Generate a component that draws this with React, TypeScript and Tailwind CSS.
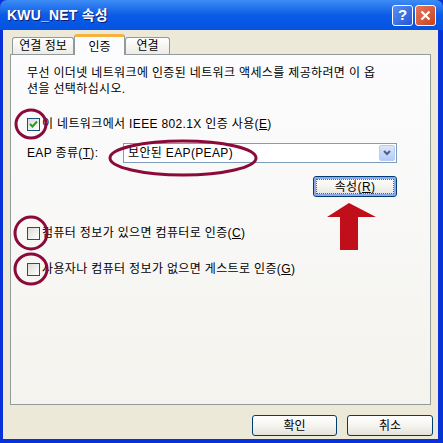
import React from 'react'

const font = { fontFamily: '"Liberation Sans", "Noto Sans CJK KR", sans-serif' }

function CheckBox({ checked }: { checked?: boolean }) {
  return (
    <span className="relative flex h-[13px] w-[13px] shrink-0 items-center justify-center border border-[#1C5180] bg-gradient-to-br from-[#DCDBD5] to-white">
      {checked && (
        <svg width="9" height="9" viewBox="0 0 9 9">
          <path d="M1 4 L3.5 6.5 L8 1.5" stroke="#21A121" strokeWidth="2" fill="none" />
        </svg>
      )}
    </span>
  )
}

function XpButton({ children, focused, className }: { children: React.ReactNode; focused?: boolean; className?: string }) {
  return (
    <div
      className={
        'flex items-center justify-center rounded-[3px] border border-[#003C74] bg-gradient-to-b from-white via-[#F5F4EF] to-[#E3E2DA] text-[12px] text-black ' +
        (focused ? 'shadow-[inset_0_0_0_2px_#8FA9E8] ' : '') +
        (className ?? '')
      }
    >
      {focused ? (
        <span className="flex h-[15px] w-[78px] items-center justify-center border border-dotted border-black/60">{children}</span>
      ) : (
        children
      )}
    </div>
  )
}

export default function App() {
  return (
    <div className="relative flex h-[443px] w-[443px] flex-col bg-[#0831D9] text-black" style={font}>
      {/* Title bar */}
      <div className="flex h-[30px] items-center justify-between rounded-t-[7px] bg-gradient-to-b from-[#3D8CF5] via-[#0A5BE6] to-[#0453E2] pl-[7px] pr-[7px]">
        <span className="text-[14px] font-bold tracking-[0.2px] text-white [text-shadow:1px_1px_0_#0A1E78]">KWU_NET 속성</span>
        <div className="flex gap-[2px]">
          <div className="flex h-[21px] w-[21px] items-center justify-center rounded-[3px] border border-white bg-gradient-to-br from-[#5B8EF5] to-[#2556D4] text-[15px] font-bold text-white">
            ?
          </div>
          <div className="flex h-[21px] w-[21px] items-center justify-center rounded-[3px] border border-white bg-gradient-to-br from-[#E8765A] to-[#C6421E]">
            <svg width="11" height="11" viewBox="0 0 11 11">
              <path d="M1.5 1.5 L9.5 9.5 M9.5 1.5 L1.5 9.5" stroke="white" strokeWidth="2.2" />
            </svg>
          </div>
        </div>
      </div>

      {/* Body */}
      <div className="mx-[3px] mb-[4px] mr-[5px] flex flex-1 flex-col bg-[#ECE9D8] pl-[7px] pr-[5px]">
        {/* Tabs */}
        <div className="mt-[3px] flex h-[21px] items-end pl-[2px]">
          <div className="flex h-[17px] w-[62px] items-center justify-center rounded-t-[3px] border border-b-0 border-[#919B9C] bg-gradient-to-b from-white to-[#ECEBE6] text-[12px]">
            연결 정보
          </div>
          <div className="relative z-10 -mb-[1px] flex h-[21px] w-[51px] items-start justify-center rounded-t-[3px] border border-b-0 border-t-[3px] border-[#919B9C] border-t-[#F5B33C] bg-[#FCFCFE] pt-[1px] text-[12px]">
            인증
          </div>
          <div className="flex h-[17px] w-[45px] items-center justify-center rounded-t-[3px] border border-b-0 border-[#919B9C] bg-gradient-to-b from-white to-[#ECEBE6] text-[12px]">
            연결
          </div>
        </div>

        {/* Panel */}
        <div className="flex h-[351px] w-[421px] flex-col border border-[#919B9C] bg-gradient-to-b from-[#FCFCFE] to-[#F4F3EE] pl-[16px] pr-[33px] pt-[10px] text-[12px] tracking-[0.35px]">
          <p className="leading-[16px]">
            무선 이더넷 네트워크에 인증된 네트워크 액세스를 제공하려면 이 옵
            <br />
            션을 선택하십시오.
          </p>

          <label className="mt-[19px] flex h-[16px] items-center gap-[2px]">
            <CheckBox checked />
            <span>이 네트워크에서 IEEE 802.1X 인증 사용(<u>E</u>)</span>
          </label>

          <div className="mt-[11px] flex h-[20px] items-center">
            <span className="w-[96px] shrink-0">
              EAP 종류(<u>T</u>):
            </span>
            <div className="flex h-[20px] flex-1 items-center justify-between border border-[#7F9DB9] bg-white pl-[4px] pr-[1px]">
              <span>보안된 EAP(PEAP)</span>
              <div className="flex h-[16px] w-[16px] items-center justify-center rounded-[2px] border border-[#B9CCF6] bg-gradient-to-b from-[#DCE6FD] to-[#B5CBF8]">
                <svg width="8" height="6" viewBox="0 0 8 6">
                  <path d="M1 1 L4 4 L7 1" stroke="#4D6185" strokeWidth="2" fill="none" />
                </svg>
              </div>
            </div>
          </div>

          <div className="mt-[13px] flex justify-end">
            <XpButton focused className="h-[21px] w-[84px]">
              <span>
                속성(<u>R</u>)
              </span>
            </XpButton>
          </div>

          <label className="mt-[28px] flex h-[16px] items-center gap-[2px]">
            <CheckBox />
            <span>컴퓨터 정보가 있으면 컴퓨터로 인증(<u>C</u>)</span>
          </label>

          <label className="mt-[20px] flex h-[16px] items-center gap-[2px]">
            <CheckBox />
            <span>사용자나 컴퓨터 정보가 없으면 게스트로 인증(<u>G</u>)</span>
          </label>
        </div>

        {/* Bottom buttons */}
        <div className="mt-[10px] flex justify-end gap-[10px]">
          <XpButton className="h-[21px] w-[85px]">확인</XpButton>
          <XpButton className="h-[21px] w-[86px]">취소</XpButton>
        </div>
      </div>

      {/* Annotations drawn over the dialog */}
      <svg className="pointer-events-none absolute left-0 top-0" width="443" height="443">
        <g fill="none" stroke="#8B0A3A" strokeWidth="3">
          <ellipse cx="31" cy="124" rx="15" ry="14" />
          <ellipse cx="183" cy="158" rx="73" ry="17" />
          <ellipse cx="31" cy="233" rx="16" ry="16" />
          <ellipse cx="31" cy="269" rx="16" ry="15" />
        </g>
        <path d="M349 203 L376 217 L358 217 L358 250 L340 250 L340 217 L327 217 Z" fill="#C00F1B" />
      </svg>
    </div>
  )
}
